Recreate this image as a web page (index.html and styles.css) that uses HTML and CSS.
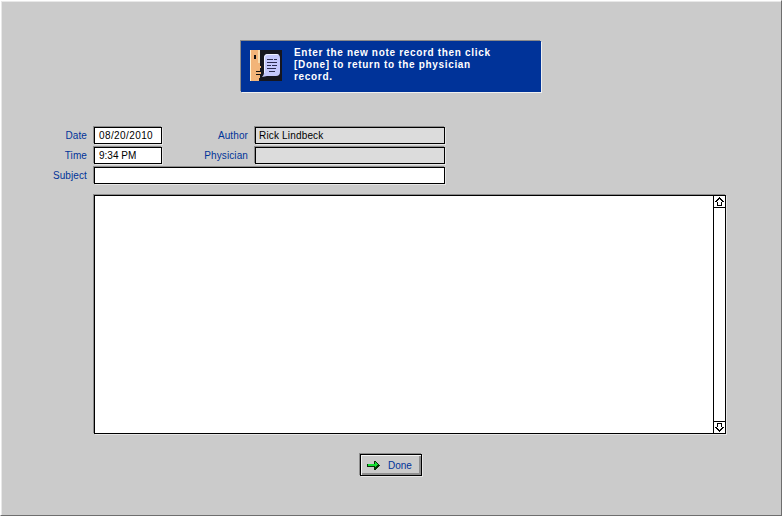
FILE: index.html
```html
<!DOCTYPE html>
<html lang="en">
<head>
<meta charset="utf-8">
<title>New note</title>
<link rel="stylesheet" href="styles.css">
</head>
<body>
<main class="window">
  <section class="banner-wrap">
    <div class="banner">
      <svg class="banner-icon" width="32" height="31" viewBox="0 0 32 31">
        <rect width="32" height="31" fill="#16161e"/>
        <path d="M0 0h10v14l1 3v1h-1v3h1v3h-1v3l-1 1v3H0z" fill="#f2b478" shape-rendering="crispEdges"/>
        <rect width="1" height="31" fill="#fff0d0" shape-rendering="crispEdges"/>
        <rect x="8" width="2" height="13" fill="#f8dcae" shape-rendering="crispEdges"/>
        <path d="M4 5h2v4H4zM6 21h5v1H6zM6 24h4v1H6z" fill="#101010" shape-rendering="crispEdges"/>
        <path d="M18 4h8q4 0 4 4v14q0 4-4 4H17l-5 1q2-2 2-4V8q0-4 4-4z" fill="#c4c8fc"/>
        <path d="M18 4h8q2 0 3 1H18q-3 0-3 3v15h-1V8q0-4 4-4z" fill="#eef0ff"/>
        <path d="M17 9h6v1h-6zM24 9h3v1h-3zM17 12h10v1H17zM17 15h4v1h-4zM22 15h5v1h-5zM17 18h9v1h-9zM19 21h6v1h-6z" fill="#2c2c50" shape-rendering="crispEdges"/>
      </svg>
      <p class="banner-text">Enter the new note record then click<br>[Done] to return to the physician<br>record.</p>
    </div>
  </section>

  <section class="form">
    <div class="row">
      <span class="label">Date</span>
      <span class="field short">08/20/2010</span>
      <span class="label second">Author</span>
      <span class="field long readonly">Rick Lindbeck</span>
    </div>
    <div class="row">
      <span class="label">Time</span>
      <span class="field short tight">9:34 PM</span>
      <span class="label second">Physician</span>
      <span class="field long readonly"></span>
    </div>
    <div class="row">
      <span class="label">Subject</span>
      <span class="field subject"></span>
    </div>
  </section>

  <section class="note">
    <div class="note-body"></div>
    <div class="scrollbar">
      <span class="scroll-btn top">
        <svg width="11" height="11" viewBox="0 0 11 11" shape-rendering="crispEdges"><path d="M5 1h1v1h1v1h1v1h1v1h1v1H8v4H3V6H1V5h1V4h1V3h1V2h1z" fill="#000"/><path d="M5 3h1v1h1v1h1v1H7v3H4V6H3V5h1V4h1z" fill="#fff"/></svg>
      </span>
      <span class="scroll-track"></span>
      <span class="scroll-btn bottom">
        <svg width="11" height="11" viewBox="0 0 11 11" shape-rendering="crispEdges"><path d="M3 1h5v4h2v1H9v1H8v1H7v1H6v1H5V9H4V8H3V7H2V6H1V5h2z" fill="#000"/><path d="M4 2h3v3h1v1H7v1H6v1H5V7H4V6H3V5h1z" fill="#fff"/></svg>
      </span>
    </div>
  </section>

  <section class="actions">
    <button class="done" type="button">
      <svg width="13" height="9" viewBox="0 0 13 9" shape-rendering="crispEdges"><path d="M7 0h2v1h1v1h1v1h1v1h1v1h-1v1h-1v1h-1v1H9v1H7V6H0V3h7z" fill="#083008"/><path d="M8 1h1v1h1v1h1v1h-1v1H9v1H8V5H1V3h7z" fill="#14e034"/></svg>
      <span>Done</span>
    </button>
  </section>
</main>
</body>
</html>
```
FILE: styles.css
```css
* { box-sizing: border-box; }
html, body { margin: 0; padding: 0; }
body {
  width: 782px;
  height: 516px;
  overflow: hidden;
  font-family: "Liberation Sans", Arial, sans-serif;
  font-size: 10px;
}
.window {
  width: 782px;
  height: 516px;
  background: #cbcbcb;
  border: 1px solid;
  border-color: #ffffff #6e6e6e #6e6e6e #ffffff;
  box-shadow: inset 1px 1px 0 #e8e8e8;
  padding-top: 40px;
}
.banner-wrap {
  display: flex;
  padding-left: 240px;
}
.banner {
  width: 300px;
  height: 51px;
  background: #003399;
  box-shadow: -1px -1px 0 #8a8a8a, 1px 1px 0 #f0f0f0;
  display: flex;
  align-items: flex-start;
  padding: 9px 0 0 9px;
}
.banner-icon { flex: none; margin-right: 12px; }
.banner-text {
  margin: -3px 0 0;
  color: #fff;
  font-weight: 700;
  font-size: 10px;
  line-height: 12px;
  letter-spacing: 0.68px;
}
.form {
  margin-top: 35px;
  display: flex;
  flex-direction: column;
  gap: 3px;
}
.row { display: flex; height: 17px; align-items: stretch; }
.label {
  width: 86px;
  margin-right: 7px;
  text-align: right;
  color: #003399;
  line-height: 17px;
  letter-spacing: 0.1px;
}
.field {
  background: #fff;
  border: 1px solid #000;
  box-shadow: -1px -1px 0 #8c8c8c, 1px 1px 0 #e6e6e6;
  color: #000;
  line-height: 15px;
  padding-left: 4px;
  letter-spacing: 0.4px;
}
.field.short { width: 68px; }
.field.tight { letter-spacing: 0; }
.field.long { width: 190px; padding-left: 3px; letter-spacing: 0.17px; }
.field.readonly { background: #dcdcdc; }
.field.subject { width: 351px; }
.note {
  margin: 11px 0 0 93px;
  width: 632px;
  height: 239px;
  display: flex;
  background: #fff;
  border: 1px solid #000;
  box-shadow: -1px -1px 0 #8c8c8c, 1px 1px 0 #e6e6e6;
}
.note-body { flex: 1; background: #fff; }
.scrollbar {
  width: 12px;
  flex: none;
  border-left: 1px solid #000;
  display: flex;
  flex-direction: column;
}
.scroll-btn {
  height: 12px;
  flex: none;
  display: flex;
  align-items: center;
  justify-content: center;
  background: #fff;
}
.scroll-btn.top { border-bottom: 1px solid #000; }
.scroll-btn.bottom { border-top: 1px solid #000; }
.scroll-track { flex: 1; background: #fff; }
.actions {
  margin-top: 20px;
  display: flex;
  padding-left: 359px;
}
.done {
  width: 62px;
  height: 22px;
  margin: 0;
  padding: 0 0 0 6px;
  background: #cbcbcb;
  border: 1px solid #000;
  box-shadow: -1px -1px 0 #8c8c8c, 1px 1px 0 #e6e6e6, inset 1px 1px 0 #f4f4f4, inset -2px -2px 0 #8e8e8e;
  display: flex;
  align-items: center;
  gap: 8px;
  color: #003399;
  font-family: "Liberation Sans", Arial, sans-serif;
  font-size: 10px;
}
```
